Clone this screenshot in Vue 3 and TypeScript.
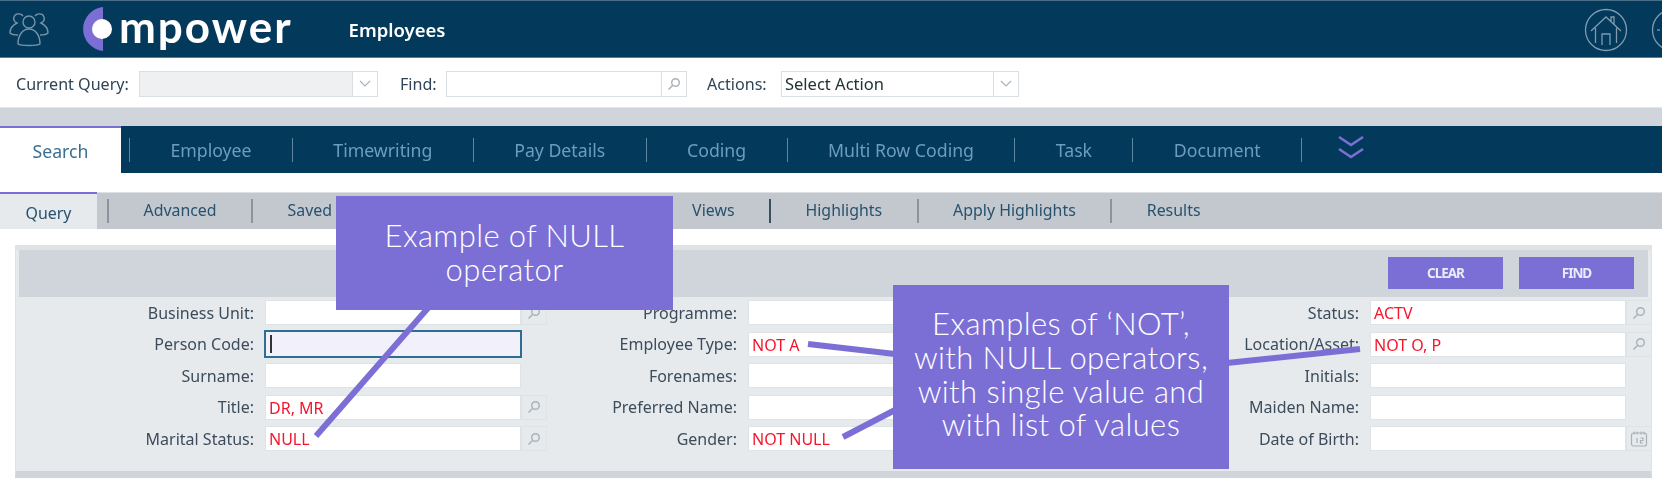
<script setup lang="ts">
interface Field { label: string; value?: string; lookup?: boolean; focus?: boolean; date?: boolean }
const mainTabs: string[] = ['Employee', 'Timewriting', 'Pay Details', 'Coding', 'Multi Row Coding', 'Task', 'Document']
const subTabs: string[] = ['Advanced', 'Saved', 'Views', 'Highlights', 'Apply Highlights', 'Results']
const columns: Field[][] = [
  [
    { label: 'Business Unit:', lookup: true },
    { label: 'Person Code:', focus: true },
    { label: 'Surname:' },
    { label: 'Title:', value: 'DR, MR', lookup: true },
    { label: 'Marital Status:', value: 'NULL', lookup: true },
  ],
  [
    { label: 'Programme:', lookup: true },
    { label: 'Employee Type:', value: 'NOT A', lookup: true },
    { label: 'Forenames:' },
    { label: 'Preferred Name:' },
    { label: 'Gender:', value: 'NOT NULL', lookup: true },
  ],
  [
    { label: 'Status:', value: 'ACTV', lookup: true },
    { label: 'Location/Asset:', value: 'NOT O, P', lookup: true },
    { label: 'Initials:' },
    { label: 'Maiden Name:' },
    { label: 'Date of Birth:', date: true },
  ],
]
</script>

<template>
  <div class="page">
    <div class="shot">
      <header class="top">
        <svg class="people" viewBox="0 0 44 36" fill="none" stroke="#7893a8" stroke-width="1.4">
          <circle cx="22" cy="11" r="6" />
          <path d="M11 33c0-8 4-15 11-15s11 7 11 15c-3 2-19 2-22 0Z" />
          <path d="M16 5c-2-3-8-3-9 1-1 3 1 5 3 6-4 2-7 5-7 10 2 2 5 2 8 2" />
          <path d="M28 5c2-3 8-3 9 1 1 3-1 5-3 6 4 2 7 5 7 10-2 2-5 2-8 2" />
        </svg>
        <div class="logo">
          <svg class="logo-mark" viewBox="0 0 34 44">
            <path d="M24 0.100a22 22 0 0 0 0 43.800V0Z" fill="#7b6fd6" />
            <circle cx="23" cy="22" r="10" fill="#fff" />
          </svg>
          <span class="logo-text">mpower</span>
        </div>
        <span class="title">Employees</span>
        <svg class="home" viewBox="0 0 44 44" fill="none" stroke="#7f9bb0" stroke-width="1.3">
          <circle cx="22" cy="22" r="20.500" />
          <path d="M7 23 22 9l15 14M11.500 20v15M32.500 20v15M18 37V26h8v11M27 13V9h3v7" />
        </svg>
        <svg class="more" viewBox="0 0 44 44" fill="none" stroke="#7f9bb0" stroke-width="1.3">
          <circle cx="22" cy="22" r="20.500" />
          <path d="M6 22h3" />
        </svg>
      </header>

      <div class="toolbar">
        <label class="tool-label first">Current Query:</label>
        <div class="combo disabled"><span class="combo-field" /><span class="combo-btn">
          <svg viewBox="0 0 12 8" width="12" height="8" fill="none" stroke="#a8b3bb" stroke-width="1.2"><path d="m1 1 5 5 5-5" /></svg>
        </span></div>
        <label class="tool-label find">Find:</label>
        <div class="combo find-box"><span class="combo-field" /><span class="combo-btn">
          <svg viewBox="0 0 14 14" width="14" height="14" fill="none" stroke="#a9b0b6" stroke-width="1.4"><circle cx="8.500" cy="5.500" r="3.800" /><path d="M5.500 8.500 1.500 12.500" /></svg>
        </span></div>
        <label class="tool-label actions">Actions:</label>
        <div class="combo action-box"><span class="combo-field">Select Action</span><span class="combo-btn">
          <svg viewBox="0 0 12 8" width="12" height="8" fill="none" stroke="#a8b3bb" stroke-width="1.2"><path d="m1 1 5 5 5-5" /></svg>
        </span></div>
      </div>

      <div class="strip" />

      <nav class="main-tabs">
        <span class="main-active">Search</span>
        <template v-for="t in mainTabs" :key="t">
          <i class="main-sep" />
          <span class="main-tab">{{ t }}</span>
        </template>
        <i class="main-sep" />
        <svg class="chev" viewBox="0 0 26 26" fill="none" stroke="#7b6fd6" stroke-width="2.600">
          <path d="m1 2 12 8 12-8M1 14l12 8 12-8" />
        </svg>
      </nav>

      <nav class="sub-tabs">
        <span class="sub-active">Query</span>
        <template v-for="t in subTabs" :key="t">
          <i class="sub-sep" :class="{ dark: t === 'Highlights' }" />
          <span class="sub-tab" :class="{ saved: t === 'Saved' }">{{ t }}</span>
        </template>
      </nav>

      <section class="panel">
        <div class="panel-head">
          <button class="btn">CLEAR</button>
          <button class="btn">FIND</button>
        </div>
        <div class="form">
          <div v-for="(col, ci) in columns" :key="ci" class="col" :class="'col' + ci">
            <div v-for="f in col" :key="f.label" class="row">
              <label class="field-label">{{ f.label }}</label>
              <span class="field" :class="{ focus: f.focus }">{{ f.value }}<i v-if="f.focus" class="caret" /></span>
              <span v-if="f.lookup" class="lookup">
                <svg viewBox="0 0 14 14" width="14" height="14" fill="none" stroke="#a9b0b6" stroke-width="1.400"><circle cx="8.500" cy="5.500" r="3.800" /><path d="M5.500 8.500 1.500 12.500" /></svg>
              </span>
              <span v-if="f.date" class="lookup">
                <svg viewBox="0 0 18 18" width="18" height="18" fill="none" stroke="#a9b0b6" stroke-width="1.200"><rect x="1.500" y="3" width="15" height="13" rx="2" /><path d="M4 1.500v3M7 1.500v3M11 1.500v3M14 1.500v3M7 8v5M10.500 8h2.500v2.500h-2.500v2.500h2.500" /></svg>
              </span>
            </div>
          </div>
        </div>
      </section>
    </div>

    <svg class="leaders" viewBox="0 0 1662 493" width="1662" height="493">
      <g stroke="#7b6fd6" stroke-width="6" fill="none">
        <path d="M428 308 316 436" />
        <path d="M808 344 895 354" />
        <path d="M843 437 895 410" />
        <path d="M1227 363 1360 349" />
      </g>
    </svg>
    <div class="callout one">Example of NULL<br />operator</div>
    <div class="callout two">Examples of ‘NOT’,<br />with NULL operators,<br />with single value and<br />with list of values</div>
  </div>
</template>

<style>
html, body { margin: 0; background: #fff; }
</style>

<style scoped>
.page { position: relative; width: 1662px; height: 493px; overflow: hidden; font-family: "Noto Sans", "Open Sans", sans-serif; background: #fff; }
.shot { filter: blur(.35px); }
.top { height: 58px; box-sizing: border-box; background: #03395a; border-top: 1px solid #4a6f88; border-bottom: 1px solid #5a7d93; display: flex; align-items: center; padding-left: 7px; color: #fff; position: relative; }
.people { width: 44px; height: 36px; }
.logo { display: flex; align-items: center; margin-left: 28px; }
.logo-mark { width: 34px; height: 44px; }
.logo-text { font-family: Lato, sans-serif; font-weight: 700; font-size: 44px; line-height: 1; margin-left: 6px; margin-top: -7px; letter-spacing: 2px; }
.title { font-size: 18.500px; font-weight: 600; margin-left: 56px; }
.home { width: 44px; height: 44px; position: absolute; left: 1584px; top: 7px; }
.more { width: 44px; height: 44px; position: absolute; left: 1651px; top: 7px; }
.toolbar { height: 49px; padding-top: 3px; box-sizing: border-box; display: flex; align-items: center; font-size: 16.100px; color: #2f4456; }
.tool-label { white-space: nowrap; }
.first { margin-left: 16px; width: 123px; }
.find { margin-left: 22px; width: 46px; }
.actions { margin-left: 20px; width: 74px; }
.combo { display: flex; height: 26px; box-sizing: border-box; border: 1px solid #d9dfe3; background: #fff; }
.combo-field { flex: 1; padding-left: 3px; line-height: 24px; color: #233; font-size: 16.500px; }
.combo-btn { width: 24px; border-left: 1px solid #d9dfe3; display: flex; align-items: center; justify-content: center; }
.disabled { width: 239px; }
.disabled .combo-field { background: #eef0f2; }
.find-box { width: 241px; }
.action-box { width: 238px; }
.strip { height: 19px; background: #cfd5da; border-top: 1px solid #e2e6e9; box-sizing: border-box; }
.main-tabs { height: 47px; background: #03395a; display: flex; align-items: center; font-size: 17.700px; color: #6e9cc0; }
.main-active { align-self: stretch; width: 121px; display: flex; align-items: center; justify-content: center; box-sizing: border-box; background: #fff; color: #3a6f8f; border-top: 2px solid #7b6fd6; margin-right: 8px; }
.main-tab { padding: 0 40.400px; white-space: nowrap; }
.main-sep { width: 1px; height: 24px; background: #5f86a3; }
.chev { width: 26px; height: 26px; margin-left: 36px; margin-top: -4px; }
.sub-tabs { margin-top: 19px; height: 37px; background: #c3c8ce; display: flex; align-items: center; font-size: 15.900px; color: #28516e; border-top: 1px solid #dde1e4; box-sizing: border-box; }
.sub-active { align-self: stretch; width: 97px; display: flex; align-items: center; justify-content: center; background: #e6eaed; border-top: 2px solid #7b6fd6; margin-top: -1px; padding-top: 3px; box-sizing: border-box; margin-right: 10px; }
.sub-tab { padding: 0 34.500px; white-space: nowrap; margin-top: -2px; }
.sub-tab.saved { padding-right: 0; width: 368px; }
.sub-sep { width: 2px; height: 24px; background: #8c949b; }
.sub-sep.dark { background: #39505f; }
.panel { margin: 16px 10px 0 15px; height: 233px; box-sizing: border-box; background: #e6eaed; border: 1px solid #dfe3e6; border-top-width: 5px; border-bottom: 7px solid #cfd5da; padding: 0 3px; }
.panel-head { height: 47px; background: #cfd5da; display: flex; justify-content: flex-end; align-items: center; gap: 16px; padding-right: 14px; }
.btn { width: 115px; height: 32px; border: 0; background: #7b6fd6; color: #e8ecfa; font-family: inherit; font-size: 13.500px; font-weight: 700; letter-spacing: -1px; padding: 0; margin-top: -2px; }
.form { display: flex; padding-top: 0; }
.col { flex: none; display: grid; grid-auto-rows: 31.500px; }
.col0 { --lw: 246px; width: 540px; }
.col1 { --lw: 189px; width: 483px; }
.col2 { --lw: 328px; }
.row { display: grid; grid-template-columns: var(--lw) 256px 26px; align-items: center; font-size: 16px; color: #3c4c5a; }
.field-label { text-align: right; padding-right: 11px; white-space: nowrap; }
.field { height: 25px; box-sizing: border-box; background: #fff; border: 1px solid #dfe3e6; padding-left: 3px; color: #f5142c; line-height: 24px; font-size: 16px; grid-column: 2; }
.field.focus { height: 28px; background: #f2f0fb; border: 2px solid #2d6f92; margin: 0 -1px; padding-left: 4px; display: flex; align-items: center; }
.caret { width: 1.500px; height: 18px; background: #333; display: block; }
.lookup { height: 25px; box-sizing: border-box; border: 1px solid #dfe3e6; display: flex; align-items: center; justify-content: center; grid-column: 3; }
.leaders { position: absolute; left: 0; top: 0; pointer-events: none; }
.callout { position: absolute; background: #7b6fd6; color: #fff; font-family: Lato, sans-serif; font-size: 31px; font-weight: 300; line-height: 33.800px; letter-spacing: .4px; text-align: center; box-sizing: border-box; white-space: nowrap; }
.one { left: 336px; top: 196px; width: 337px; height: 114px; padding-top: 23px; }
.two { left: 893px; top: 285px; width: 336px; height: 184px; padding-top: 22px; }
</style>
